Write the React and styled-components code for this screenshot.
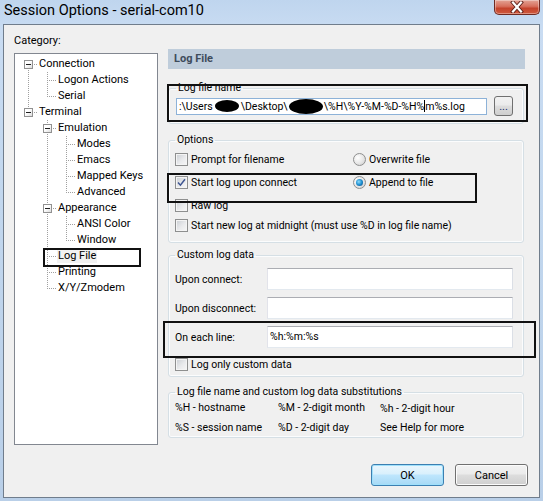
import React from 'react';
import styled, { createGlobalStyle, css } from 'styled-components';

const GlobalStyle = createGlobalStyle`
  html, body {
    margin: 0;
    padding: 0;
  }
  body {
    width: 543px;
    height: 501px;
    overflow: hidden;
    font-family: 'Segoe UI', Roboto, 'Noto Sans', sans-serif;
    font-size: 10.5px;
    color: #000;
  }
  * {
    box-sizing: border-box;
  }
`;

// black annotation boxes drawn over the screenshot
const markCss = css`
  position: relative;
  &::after {
    content: '';
    position: absolute;
    left: ${(p) => p.$mark.left}px;
    top: ${(p) => p.$mark.top}px;
    width: ${(p) => p.$mark.width}px;
    height: ${(p) => p.$mark.height}px;
    border: 2px solid #111;
    pointer-events: none;
  }
`;

const Window = styled.div`
  width: 543px;
  height: 501px;
  display: flex;
  flex-direction: column;
  background: linear-gradient(180deg, #bfd5ee 0%, #c9dcf2 6%, #c2d7ee 40%, #b9cfe8 100%);
`;

const TitleBar = styled.div`
  height: 24px;
  display: flex;
  justify-content: space-between;
  align-items: flex-start;
  padding-left: 4px;
`;

const Title = styled.div`
  font-size: 14.5px;
  line-height: 21px;
  color: #000;
`;

const CloseButton = styled.div`
  width: 46px;
  height: 15px;
  margin-right: 3px;
  display: flex;
  align-items: center;
  justify-content: center;
  border: 1px solid #6e2a22;
  border-top: none;
  border-radius: 0 0 5px 5px;
  background: linear-gradient(180deg, #e3a395 0%, #d7705d 45%, #c4432c 60%, #cf5a3e 100%);
  box-shadow: inset 0 0 0 1px rgba(255, 255, 255, 0.35);
`;

const Client = styled.div`
  flex: 1;
  margin: 0 3px 3px 3px;
  border: 1px solid #707d8c;
  background: #f0f0f0;
  display: flex;
  flex-direction: column;
`;

const Body = styled.div`
  display: flex;
  gap: 10px;
  padding: 8px 0 0 10px;
`;

const LeftCol = styled.div`
  width: 144px;
  display: flex;
  flex-direction: column;
`;

const CatLabel = styled.div`
  line-height: 15px;
  margin-bottom: 5px;
  font-size: 11px;
`;

const Tree = styled.div`
  height: 392px;
  border: 1px solid #828790;
  background: #fff;
  padding-top: 2px;
`;

const TreeRow = styled.div`
  height: 16px;
  display: flex;
  align-items: center;
  padding-left: 4px;
  ${(p) => p.$mark && markCss}
`;

const dotV = 'repeating-linear-gradient(180deg, #a0a0a0 0 1px, transparent 1px 2px)';
const dotH = 'repeating-linear-gradient(90deg, #a0a0a0 0 1px, transparent 1px 2px)';

function guideBg({ top, bottom, branch }) {
  const layers = [];
  const start = top ? 0 : 8;
  const end = bottom ? 16 : 8;
  if (end > start) layers.push([dotV, `1px ${end - start}px`, `9px ${start}px`]);
  if (branch) layers.push([dotH, '10px 1px', '9px 8px']);
  if (!layers.length) return 'background: none;';
  return `
    background-image: ${layers.map((l) => l[0]).join(', ')};
    background-size: ${layers.map((l) => l[1]).join(', ')};
    background-position: ${layers.map((l) => l[2]).join(', ')};
    background-repeat: no-repeat;
  `;
}

const Guide = styled.span`
  flex: 0 0 19px;
  height: 16px;
  display: flex;
  align-items: center;
  justify-content: flex-start;
  padding-left: 5px;
  ${(p) => guideBg(p.$lines)}
`;

const Expander = styled.span`
  width: 9px;
  height: 9px;
  border: 1px solid #919191;
  background: linear-gradient(135deg, #fff 40%, #dcdcdc 100%);
  display: flex;
  align-items: center;
  justify-content: center;
  &::before {
    content: '';
    width: 5px;
    height: 1px;
    background: #1f1f1f;
  }
`;

const NodeLabel = styled.span`
  font-size: 11px;
  line-height: 14px;
  padding: 0 1px;
  white-space: nowrap;
  background: ${(p) => (p.$selected ? '#f2f2f2' : 'transparent')};
`;

const RightPanel = styled.div`
  width: 356px;
  margin-top: 16px;
  display: flex;
  flex-direction: column;
`;

const Header = styled.div`
  height: 20px;
  width: 357px;
  line-height: 20px;
  padding-left: 6px;
  background: #bfcddb;
  color: #3e4c5b;
  font-weight: bold;
  font-size: 11px;
`;

const Group = styled.fieldset`
  margin: ${(p) => p.$mt}px 0 0 0;
  padding: ${(p) => p.$pad};
  border: 1px solid #d5dfe5;
  border-radius: 3px;
  box-shadow: inset 0 0 0 1px #fbfcfd;
  min-width: 0;
`;

const Legend = styled.legend`
  padding: 0 2px;
  margin-left: 0;
  line-height: 14px;
  color: #000;
`;

const FileRow = styled.div`
  display: flex;
  align-items: center;
  gap: 7px;
  ${(p) => p.$mark && markCss}
`;

const FileInput = styled.div`
  width: 312px;
  height: 17px;
  border: 1px solid #8db2d8;
  background: #fff;
  display: flex;
  align-items: center;
  padding-left: 2px;
  white-space: nowrap;
  overflow: hidden;
`;

const Blob = styled.span`
  display: inline-block;
  width: ${(p) => p.$w}px;
  height: ${(p) => p.$h}px;
  border-radius: 50%;
  background: #000;
  margin: 0 ${(p) => p.$gap}px;
  flex: none;
`;

const Caret = styled.span`
  display: inline-block;
  width: 1px;
  height: 12px;
  background: #000;
  flex: none;
`;

const SmallButton = styled.div`
  width: 19px;
  height: 20px;
  border: 1px solid #707070;
  border-radius: 3px;
  background: linear-gradient(180deg, #f2f2f2 0%, #ebebeb 45%, #dddddd 50%, #cfcfcf 100%);
  display: flex;
  align-items: flex-end;
  justify-content: center;
  padding-bottom: 3px;
  font-size: 11px;
  line-height: 10px;
  color: #1a2f6e;
`;

const OptionRow = styled.div`
  height: ${(p) => p.$h || 23}px;
  display: grid;
  grid-template-columns: 178px 1fr;
  align-items: center;
  ${(p) => p.$mark && markCss}
`;

const Choice = styled.label`
  display: flex;
  align-items: center;
  gap: 3px;
  white-space: nowrap;
`;

const Box = styled.span`
  width: 13px;
  height: 13px;
  border: 1px solid #8e8f8f;
  background: linear-gradient(135deg, #c9cdd2 0%, #e9eaec 55%, #f7f7f7 100%);
  box-shadow: inset 0 0 0 1px #f4f4f4;
  display: flex;
  align-items: center;
  justify-content: center;
  flex: none;
`;

const Radio = styled.span`
  width: 13px;
  height: 13px;
  border-radius: 50%;
  border: 1px solid #8e8f8f;
  background: radial-gradient(circle at 35% 35%, #ffffff 0%, #e6e6e6 55%, #c9c9c9 100%);
  display: flex;
  align-items: center;
  justify-content: center;
  flex: none;
  &::before {
    content: '';
    display: ${(p) => (p.$checked ? 'block' : 'none')};
    width: 7px;
    height: 7px;
    border-radius: 50%;
    background: radial-gradient(circle at 40% 40%, #8fdcfb 0%, #1e8fd0 50%, #0a3f78 100%);
  }
`;

const DataGrid = styled.div`
  display: flex;
  flex-direction: column;
  gap: 7px;
`;

const DataRow = styled.div`
  display: grid;
  grid-template-columns: 92px 246px;
  align-items: center;
  ${(p) => p.$mark && markCss}
`;

const TextBox = styled.div`
  height: 22px;
  border: 1px solid;
  border-color: #abadb3 #dbdfe6 #e3e9ef #e2e3ea;
  background: #fff;
  padding-left: 2px;
  line-height: 20px;
`;

const CheckLine = styled.div`
  margin-top: 8px;
  height: 16px;
  display: flex;
  align-items: center;
`;

const SubGrid = styled.div`
  display: grid;
  grid-template-columns: 103px 102px 1fr;
  grid-auto-rows: 16px;
  row-gap: 4px;
  align-items: center;
  white-space: nowrap;
`;

const SubCell = styled.span`
  position: relative;
  top: ${(p) => p.$dy || 0}px;
`;

const ButtonRow = styled.div`
  margin-top: auto;
  display: flex;
  justify-content: flex-end;
  gap: 11px;
  padding: 0 11px 11px 0;
`;

const DialogButton = styled.div`
  width: 73px;
  height: 22px;
  border-radius: 3px;
  display: flex;
  align-items: center;
  justify-content: center;
  font-size: 11px;
  border: 1px solid ${(p) => (p.$default ? '#3c7fb1' : '#707070')};
  background: ${(p) =>
    p.$default
      ? 'linear-gradient(180deg, #eaf6fd 0%, #d9f0fc 45%, #bee6fd 50%, #a7d9f5 100%)'
      : 'linear-gradient(180deg, #f2f2f2 0%, #ebebeb 45%, #dddddd 50%, #cfcfcf 100%)'};
  box-shadow: inset 0 0 0 1px ${(p) => (p.$default ? '#9fe0fb' : '#fcfcfc')};
`;

const tree = [
  {
    label: 'Connection',
    children: [{ label: 'Logon Actions' }, { label: 'Serial' }],
  },
  {
    label: 'Terminal',
    children: [
      {
        label: 'Emulation',
        children: [
          { label: 'Modes' },
          { label: 'Emacs' },
          { label: 'Mapped Keys' },
          { label: 'Advanced' },
        ],
      },
      {
        label: 'Appearance',
        children: [{ label: 'ANSI Color' }, { label: 'Window' }],
      },
      { label: 'Log File', selected: true },
      { label: 'Printing' },
      { label: 'X/Y/Zmodem' },
    ],
  },
];

function flatten(nodes, ancestors = [], depth = 0, out = []) {
  nodes.forEach((node, i) => {
    const isLast = i === nodes.length - 1;
    out.push({
      ...node,
      ancestors,
      top: !(depth === 0 && i === 0),
      bottom: !isLast,
    });
    if (node.children) flatten(node.children, ancestors.concat(!isLast), depth + 1, out);
  });
  return out;
}

const rows = flatten(tree);

function Check({ checked }) {
  return (
    <Box>
      {checked && (
        <svg width="9" height="9" viewBox="0 0 9 9">
          <path d="M1 4.6 L3.4 7.2 L8 1.2" fill="none" stroke="#3e5591" strokeWidth="1.5" />
        </svg>
      )}
    </Box>
  );
}

export default function App() {
  return (
    <>
      <GlobalStyle />
      <Window>
        <TitleBar>
          <Title>Session Options - serial-com10</Title>
          <CloseButton>
            <svg width="14" height="12" viewBox="0 0 14 12">
              <path d="M3 1.5 L11 10.5 M11 1.5 L3 10.5" stroke="#5b1f18" strokeWidth="4" strokeLinecap="square" />
              <path d="M3 1.5 L11 10.5 M11 1.5 L3 10.5" stroke="#ffffff" strokeWidth="2.2" strokeLinecap="square" />
            </svg>
          </CloseButton>
        </TitleBar>
        <Client>
          <Body>
            <LeftCol>
              <CatLabel>Category:</CatLabel>
              <Tree>
                {rows.map((r) => (
                  <TreeRow
                    key={r.label}
                    $mark={r.selected ? { left: 28, top: 0, width: 94, height: 15 } : null}
                  >
                    {r.ancestors.map((line, k) => (
                      <Guide key={k} $lines={{ top: line, bottom: line, branch: false }} />
                    ))}
                    <Guide $lines={{ top: r.top, bottom: r.bottom, branch: true }}>
                      {r.children && <Expander />}
                    </Guide>
                    <NodeLabel $selected={r.selected}>{r.label}</NodeLabel>
                  </TreeRow>
                ))}
              </Tree>
            </LeftCol>

            <RightPanel>
              <Header>Log File</Header>

              <Group $mt={12} $pad="1px 10px 7px 7px">
                <Legend>Log file name</Legend>
                <FileRow $mark={{ left: -9, top: -12, width: 357, height: 34 }}>
                  <FileInput>
                    :\Users
                    <Blob $w={24} $h={12} $gap={2} />
                    \Desktop\
                    <Blob $w={34} $h={15} $gap={1} />
                    \%H\%Y-%M-%D-%H%
                    <Caret />
                    m%s.log
                  </FileInput>
                  <SmallButton>...</SmallButton>
                </FileRow>
              </Group>

              <Group $mt={9} $pad="1px 6px 8px 6px">
                <Legend>Options</Legend>
                <OptionRow>
                  <Choice>
                    <Check />
                    Prompt for filename
                  </Choice>
                  <Choice>
                    <Radio />
                    Overwrite file
                  </Choice>
                </OptionRow>
                <OptionRow $mark={{ left: -8, top: 2, width: 306, height: 26 }}>
                  <Choice>
                    <Check checked />
                    Start log upon connect
                  </Choice>
                  <Choice>
                    <Radio $checked />
                    Append to file
                  </Choice>
                </OptionRow>
                <OptionRow>
                  <Choice>
                    <Check />
                    Raw log
                  </Choice>
                </OptionRow>
                <OptionRow $h={17}>
                  <Choice>
                    <Check />
                    Start new log at midnight (must use %D in log file name)
                  </Choice>
                </OptionRow>
              </Group>

              <Group $mt={5} $pad="6px 6px 4px 6px">
                <Legend>Custom log data</Legend>
                <DataGrid>
                  <DataRow>
                    <span>Upon connect:</span>
                    <TextBox />
                  </DataRow>
                  <DataRow>
                    <span>Upon disconnect:</span>
                    <TextBox />
                  </DataRow>
                  <DataRow $mark={{ left: -12, top: -5, width: 369, height: 33 }}>
                    <span>On each line:</span>
                    <TextBox>%h:%m:%s</TextBox>
                  </DataRow>
                </DataGrid>
                <CheckLine>
                  <Choice>
                    <Check />
                    Log only custom data
                  </Choice>
                </CheckLine>
              </Group>

              <Group $mt={8} $pad="0 6px 2px 6px">
                <Legend>Log file name and custom log data substitutions</Legend>
                <SubGrid>
                  <SubCell>%H - hostname</SubCell>
                  <SubCell>%M - 2-digit month</SubCell>
                  <SubCell $dy={1}>%h - 2-digit hour</SubCell>
                  <SubCell>%S - session name</SubCell>
                  <SubCell>%D - 2-digit day</SubCell>
                  <SubCell>See Help for more</SubCell>
                </SubGrid>
              </Group>
            </RightPanel>
          </Body>

          <ButtonRow>
            <DialogButton $default>OK</DialogButton>
            <DialogButton>Cancel</DialogButton>
          </ButtonRow>
        </Client>
      </Window>
    </>
  );
}
